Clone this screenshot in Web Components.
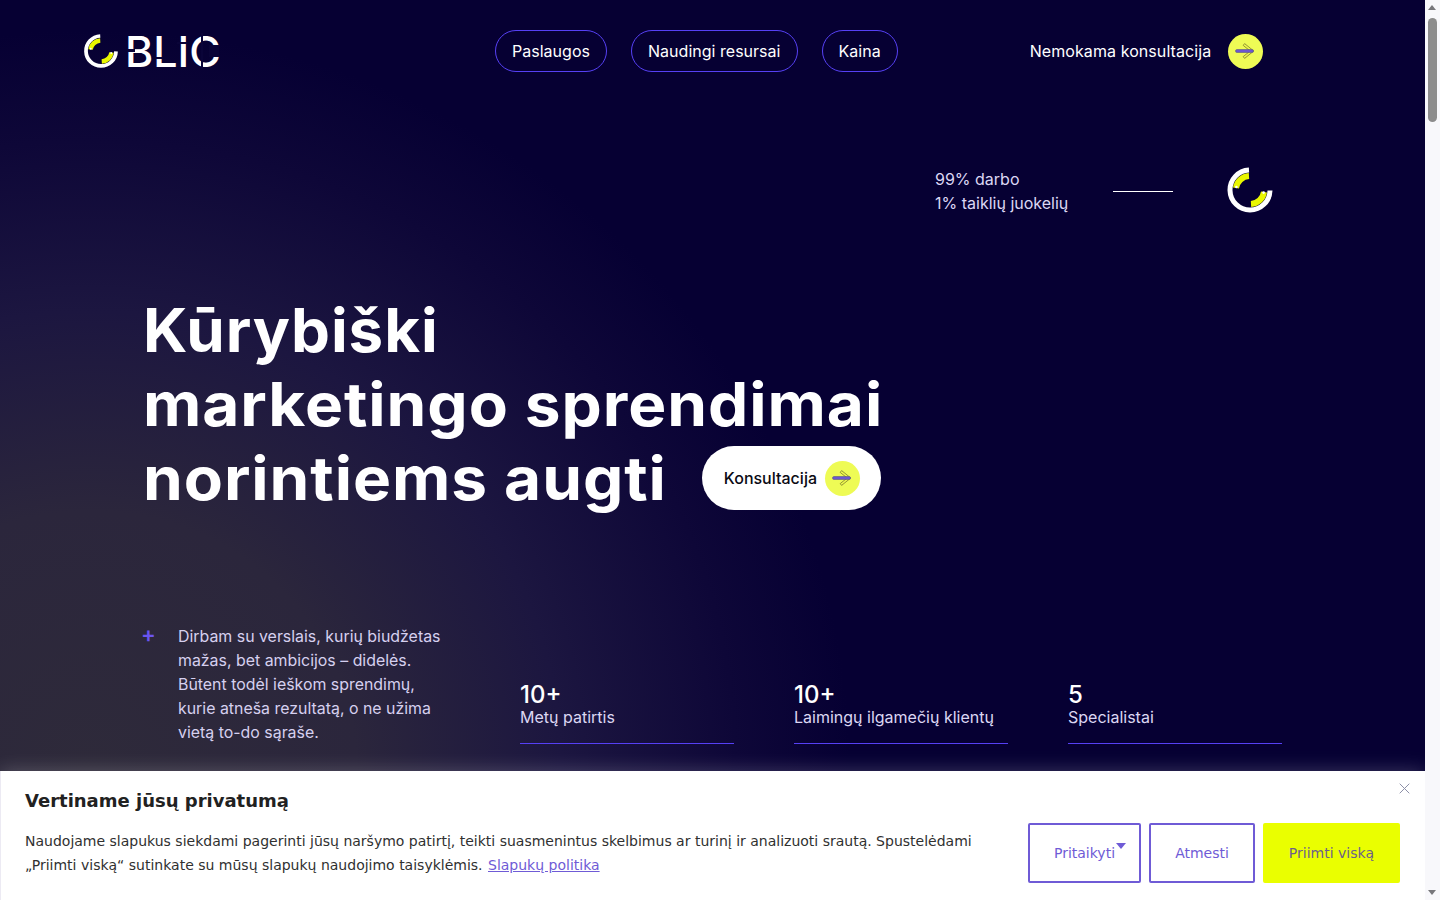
<!DOCTYPE html>
<html lang="lt">
<head>
<meta charset="utf-8">
<title>BLIC</title>
<style>
  html, body { margin: 0; height: 100%; overflow: hidden; }
  body { font-family: Inter, "Liberation Sans", sans-serif; color: #fff; background: #060033; }
</style>
</head>
<body>
<blic-page>
  <blic-header slot="top"></blic-header>
  <blic-hero slot="top"></blic-hero>
  <cookie-banner slot="over"></cookie-banner>
</blic-page>

<script>
const ARROW = `<svg width="26" height="18" viewBox="0 0 26 18">
  <path d="M11.6 1.6 L20.8 9 L11.6 16.4 L10.2 14.6 L17.2 9 L10.2 3.4 Z" fill="#eef84c" stroke="#7c7c30" stroke-width=".8"/>
  <rect x="2.5" y="7.5" width="18" height="3" rx="1.5" fill="#6b57cf" stroke="#5c5a80" stroke-width=".6"/>
</svg>`;

const RING = `<svg viewBox="-24 -24 48 48" width="100%" height="100%">
  <path d="M-1 -20 A20 20 0 1 0 20 0.5" fill="none" stroke="#fff" stroke-width="5"/>
  <path d="M-1 -14 A14 14 0 0 0 -14 -2 M14 2 A14 14 0 0 1 1 14" fill="none" stroke="#e9f700" stroke-width="6"/>
  <circle cx="-13.6" cy="-3" r="1.3" fill="#fff"/><circle cx="13.6" cy="2.6" r="1.3" fill="#fff"/>
</svg>`;

class ArrowBadge extends HTMLElement {
  constructor() {
    super();
    this.attachShadow({ mode: "open" }).innerHTML = `
      <style>
        :host { display: flex; align-items: center; justify-content: center; width: 35px; height: 35px;
          border-radius: 50%; background: #eefb55; flex: none; }
        svg { display: block; }
      </style>${ARROW}`;
  }
}
customElements.define("arrow-badge", ArrowBadge);

class RingMark extends HTMLElement {
  constructor() {
    super();
    this.attachShadow({ mode: "open" }).innerHTML = `
      <style>:host { display: block; width: var(--size, 48px); height: var(--size, 48px); flex: none; } svg { display: block; }</style>${RING}`;
  }
}
customElements.define("ring-mark", RingMark);

class BlicLogo extends HTMLElement {
  constructor() {
    super();
    this.attachShadow({ mode: "open" }).innerHTML = `
      <style>
        :host { display: flex; align-items: center; gap: 6px; width: 140px; --size: 36px; }
        .word { position: relative; font: 500 43px/36px Inter, "Liberation Sans", sans-serif; color: #fff; }
        .cut { position: absolute; background: #0a0438; }
      </style>
      <ring-mark></ring-mark>
      <span class="word">BLIC<i class="cut" style="left:2px;top:16px;width:8px;height:3px"></i><i class="cut" style="left:30px;top:24px;width:8px;height:2px"></i><i class="cut" style="left:52px;top:9px;width:10px;height:2px"></i><i class="cut" style="left:76px;top:0;width:2px;height:36px"></i><i class="cut" style="left:84px;top:12px;width:10px;height:12px"></i></span>`;
  }
}
customElements.define("blic-logo", BlicLogo);

class NavPill extends HTMLElement {
  constructor() {
    super();
    this.attachShadow({ mode: "open" }).innerHTML = `
      <style>
        :host { display: flex; align-items: center; height: 42px; padding: 0 16px; box-sizing: border-box;
          border: 1px solid #5640f5; border-radius: 21px; font-size: 16px; font-weight: 400; letter-spacing: .02px; color: #fff; }
      </style><slot></slot>`;
  }
}
customElements.define("nav-pill", NavPill);

class BlicHeader extends HTMLElement {
  constructor() {
    super();
    this.attachShadow({ mode: "open" }).innerHTML = `
      <style>
        :host { display: flex; align-items: center; padding: 30px 0 0 83px; height: 42px; }
        nav { display: flex; gap: 24px; margin-left: 272px; }
        .cta { display: flex; align-items: center; gap: 17px; margin-left: 132px; font-size: 16px; font-weight: 400; letter-spacing: .08px; }
      </style>
      <blic-logo></blic-logo>
      <nav>
        <nav-pill>Paslaugos</nav-pill>
        <nav-pill>Naudingi resursai</nav-pill>
        <nav-pill>Kaina</nav-pill>
      </nav>
      <div class="cta">Nemokama konsultacija <arrow-badge></arrow-badge></div>`;
  }
}
customElements.define("blic-header", BlicHeader);

class StatItem extends HTMLElement {
  constructor() {
    super();
    this.attachShadow({ mode: "open" }).innerHTML = `
      <style>
        :host { display: block; border-bottom: 1px solid #5640f5; padding-bottom: 14px; }
        b { display: block; padding-top: 3px; font-size: 24px; line-height: 21px; font-weight: 500; }
        span { display: block; font-size: 16px; line-height: 24px; color: #dcd7f3; }
      </style>
      <b>${this.getAttribute("value")}</b><span><slot></slot></span>`;
  }
}
customElements.define("stat-item", StatItem);

class BlicHero extends HTMLElement {
  constructor() {
    super();
    this.attachShadow({ mode: "open" }).innerHTML = `
      <style>
        :host { display: block; padding: 0 142px 0 143px; }
        .tag { display: flex; align-items: center; margin: 94px 0 0 792px; font-size: 16px; line-height: 24px; color: #dcd7f3; --size: 48px; }
        .tag i { width: 60px; height: 1px; background: #fff; margin: 0 53px 0 45px; }
        .tag ring-mark { margin-bottom: 2px; }
        h1 { margin: 77px 0 0; font-size: 60px; line-height: 74px; font-weight: 700; letter-spacing: .9px; color: #fff; }
        h1 span { display: block; white-space: nowrap; transform: scaleX(1.065); transform-origin: left; }
        h1 span.first { transform: scaleX(1.03); }
        .row { display: flex; align-items: center; justify-content: space-between; width: 738px; }
        .btn { display: flex; align-items: center; gap: 8px; height: 64px; padding: 0 21px 0 22px; border-radius: 32px;
          background: #fff; color: #0a0a14; font-size: 16px; font-weight: 500; letter-spacing: 0; }
        .low { display: grid; grid-template-columns: 297px 1fr; gap: 80px; margin-top: 110px; align-items: end; }
        .about { display: flex; gap: 24px; font-size: 15.9px; line-height: 24px; color: #d6d0ef; margin: 0; }
        .about span:last-child { white-space: nowrap; }
        .plus { color: #6b55f0; font-size: 22px; line-height: 18px; font-weight: 600; width: 13px; flex: none; margin-left: -2px; }
        .stats { display: grid; grid-template-columns: repeat(3, 214px); gap: 60px; margin-bottom: 1px; }
      </style>
      <div class="tag">
        <span>99% darbo<br>1% taiklių juokelių</span><i></i><ring-mark></ring-mark>
      </div>
      <h1>
        <span class="first">Kūrybiški</span>
        <span>marketingo sprendimai</span>
        <div class="row"><span>norintiems augti</span>
          <div class="btn">Konsultacija <arrow-badge></arrow-badge></div>
        </div>
      </h1>
      <div class="low">
        <div class="about">
          <span class="plus">+</span>
          <span>Dirbam su verslais, kurių biudžetas<br>mažas, bet ambicijos – didelės.<br>Būtent todėl ieškom sprendimų,<br>kurie atneša rezultatą, o ne užima<br>vietą to-do sąraše.</span>
        </div>
        <div class="stats">
          <stat-item value="10+">Metų patirtis</stat-item>
          <stat-item value="10+">Laimingų ilgamečių klientų</stat-item>
          <stat-item value="5">Specialistai</stat-item>
        </div>
      </div>`;
  }
}
customElements.define("blic-hero", BlicHero);

class CookieBanner extends HTMLElement {
  constructor() {
    super();
    this.attachShadow({ mode: "open" }).innerHTML = `
      <style>
        :host { display: flex; flex-direction: column; box-sizing: border-box; height: 129px; padding: 19px 25px 0 24px;
          background: #fff; color: #212121; font-family: "DejaVu Sans", sans-serif; box-shadow: 0 0 18px rgba(255,255,255,.22);
          border: 1px solid #eceaf3; border-width: 0 0 0 1px; position: absolute; left: 0; right: 0; bottom: 0; }
        h2 { margin: 0; font-size: 18px; line-height: 22px; font-weight: 700; }
        .body { display: flex; justify-content: space-between; margin-top: 11px; }
        p { margin: 6px 0 0; font-size: 14px; line-height: 24px; color: #303030; width: 985px; }
        a { color: #6f5bd6; margin-left: 1px; }
        .btns { display: flex; gap: 8px; }
        .b { display: flex; align-items: center; justify-content: center; position: relative; box-sizing: border-box; height: 60px; border: 2px solid #6f5bd6;
          border-radius: 2px; color: #6f5bd6; font-size: 14px; }
        .b.y { background: #eaff00; border-color: #eaff00; color: #6c5f8c; }
        .tri { position: absolute; top: 18px; right: 13px; width: 0; height: 0; border: 5px solid transparent; border-top: 6px solid #6f5bd6; border-bottom: 0; }
        .x { position: absolute; top: 12px; right: 15px; width: 11px; height: 11px; display: block; }
      </style>
      <svg class="x" viewBox="0 0 11 11"><path d="M.7.7 10.3 10.3M10.3.7.7 10.3" stroke="#8d90a8" stroke-width="1" fill="none"/></svg>
      <h2>Vertiname jūsų privatumą</h2>
      <div class="body">
        <p>Naudojame slapukus siekdami pagerinti jūsų naršymo patirtį, teikti suasmenintus skelbimus ar turinį ir analizuoti srautą. Spustelėdami „Priimti viską“ sutinkate su mūsų slapukų naudojimo taisyklėmis. <a href="#">Slapukų politika</a></p>
        <div class="btns">
          <div class="b" style="width:113px">Pritaikyti<span class="tri"></span></div>
          <div class="b" style="width:106px">Atmesti</div>
          <div class="b y" style="width:137px">Priimti viską</div>
        </div>
      </div>`;
  }
}
customElements.define("cookie-banner", CookieBanner);

class FakeScrollbar extends HTMLElement {
  constructor() {
    super();
    this.attachShadow({ mode: "open" }).innerHTML = `
      <style>
        :host { display: block; position: relative; width: 15px; flex: none; background: #f8f8fb; }
        i { position: absolute; left: 3px; width: 0; height: 0; border: 4.5px solid transparent; }
        .up { top: 5px; border-bottom: 5px solid #77777b; border-top: 0; }
        .down { bottom: 5px; border-top: 5px solid #77777b; border-bottom: 0; }
        .thumb { position: absolute; left: 3px; top: 18px; width: 9px; height: 104px; border-radius: 5px; background: #8c8c8c; }
      </style>
      <i class="up"></i><div class="thumb"></div><i class="down"></i>`;
  }
}
customElements.define("fake-scrollbar", FakeScrollbar);

class BlicPage extends HTMLElement {
  constructor() {
    super();
    this.attachShadow({ mode: "open" }).innerHTML = `
      <style>
        :host { display: flex; height: 900px; width: 1440px; overflow: hidden; }
        main { position: relative; flex: 1; min-width: 0; overflow: hidden;
          background: radial-gradient(ellipse 760px 740px at 90px 770px, #2e2a3a 0%, #2b263c 35%, #1c1640 62%, #0e0738 85%, #060033 100%); }
      </style>
      <main><slot name="top"></slot><slot name="over"></slot></main>
      <fake-scrollbar></fake-scrollbar>`;
  }
}
customElements.define("blic-page", BlicPage);
</script>
</body>
</html>
